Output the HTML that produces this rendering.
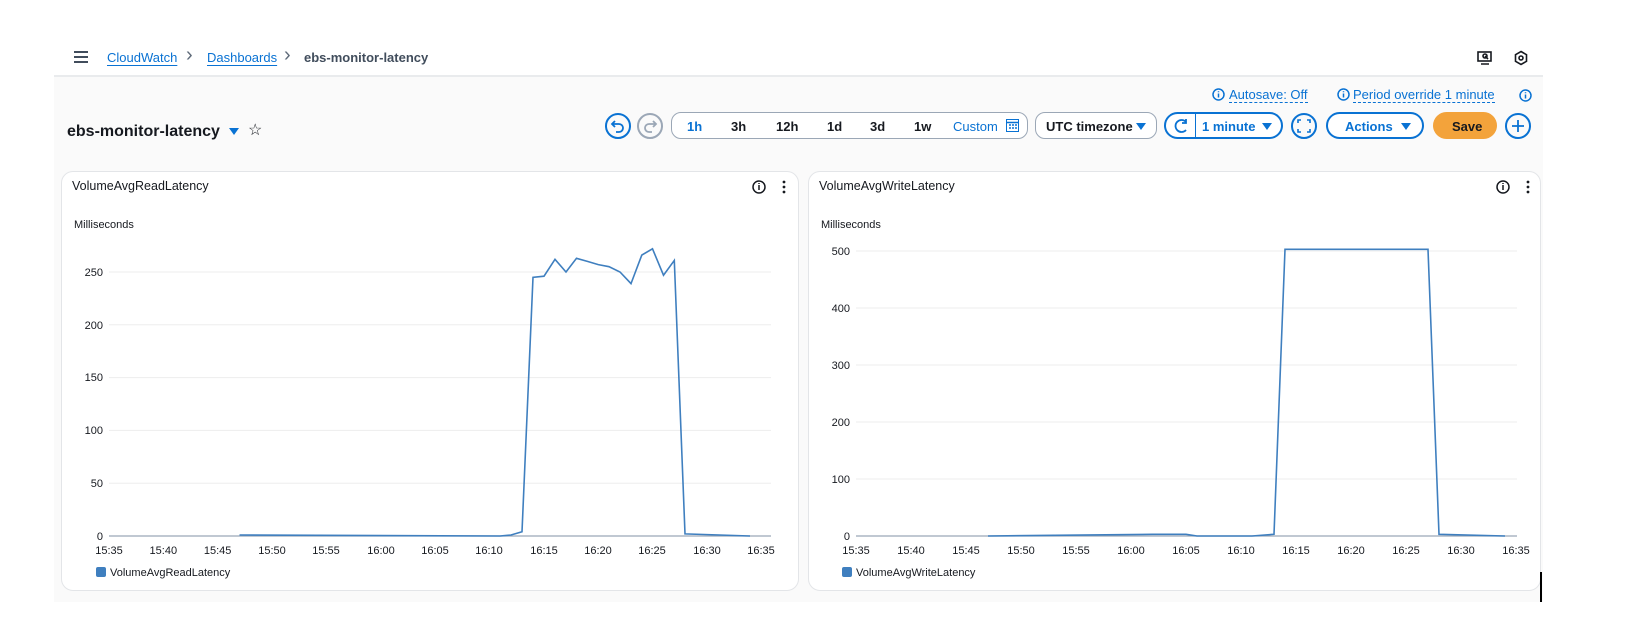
<!DOCTYPE html>
<html><head><meta charset="utf-8"><style>
*{margin:0;padding:0;box-sizing:border-box}
body{width:1650px;height:630px;background:#fff;font-family:"Liberation Sans",sans-serif;color:#16191f;position:relative;overflow:hidden}
.a{position:absolute;white-space:nowrap}
.lnk{color:#0972d3;text-decoration:underline;text-underline-offset:3px}
.gray{position:absolute;left:54px;top:75px;width:1489px;height:527px;background:#fafafa;border-top:2px solid #e9ebed}
.panel{position:absolute;top:171px;height:420px;background:#fff;border:1px solid #e3e5e8;border-radius:12px}
.pill{position:absolute;border:1px solid #9ba7b6;border-radius:10px;background:#fff;height:27px;top:112px}
.circ{position:absolute;width:26px;height:26px;border:2px solid #0972d3;border-radius:50%;top:113px}
.t{font-size:13px;font-weight:bold;color:#16191f}
</style></head><body>
<div class="gray"></div>
<div class="a" style="left:74px;top:51px;width:14px;height:2px;background:#414d5c;box-shadow:0 5px 0 #414d5c,0 10px 0 #414d5c"></div>
<div class="a lnk" style="left:107px;top:50px;font-size:13px">CloudWatch</div>
<div class="a" style="left:186px;top:44px;font-size:20px;color:#5f6b7a">&#8250;</div>
<div class="a lnk" style="left:207px;top:50px;font-size:13px">Dashboards</div>
<div class="a" style="left:284px;top:44px;font-size:20px;color:#5f6b7a">&#8250;</div>
<div class="a" style="left:304px;top:50px;font-size:13px;font-weight:bold;color:#414d5c">ebs-monitor-latency</div>
<svg class="a" style="left:1477px;top:50px" width="16" height="16" viewBox="0 0 16 16" fill="none" stroke="#16191f" stroke-width="1.6"><rect x="1" y="2" width="13" height="9"/><path d="M4 14h8M8 6l3 3"/><circle cx="8" cy="6" r="2"/></svg>
<svg class="a" style="left:1513px;top:50px" width="16" height="16" viewBox="0 0 16 16" fill="none" stroke="#16191f" stroke-width="1.6"><path d="M8 1.5l5.5 3.2v6.6L8 14.5 2.5 11.3V4.7z"/><circle cx="8" cy="8" r="2"/></svg>
<svg class="a" style="left:1212px;top:88px" width="13" height="13"><circle cx="6.5" cy="6.5" r="5.5" fill="none" stroke="#0972d3" stroke-width="1.5"/><path d="M6.5 5.5v4M6.5 3.3v1" stroke="#0972d3" stroke-width="1.5"/></svg>
<div class="a" style="left:1229px;top:87px;font-size:13px;color:#0972d3;border-bottom:1px dashed #0972d3">Autosave: Off</div>
<svg class="a" style="left:1337px;top:88px" width="13" height="13"><circle cx="6.5" cy="6.5" r="5.5" fill="none" stroke="#0972d3" stroke-width="1.5"/><path d="M6.5 5.5v4M6.5 3.3v1" stroke="#0972d3" stroke-width="1.5"/></svg>
<div class="a" style="left:1353px;top:87px;font-size:13px;color:#0972d3;border-bottom:1px dashed #0972d3">Period override 1 minute</div>
<svg class="a" style="left:1519px;top:89px" width="13" height="13"><circle cx="6.5" cy="6.5" r="5.5" fill="none" stroke="#0972d3" stroke-width="1.5"/><path d="M6.5 5.5v4M6.5 3.3v1" stroke="#0972d3" stroke-width="1.5"/></svg>
<div class="a" style="left:67px;top:123px;font-size:16px;font-weight:bold">ebs-monitor-latency</div>
<div class="a" style="left:229px;top:128px;width:0;height:0;border-left:5px solid transparent;border-right:5px solid transparent;border-top:7px solid #0972d3"></div>
<div class="a" style="left:248px;top:120px;font-size:16px">&#9734;</div>
<div class="circ" style="left:605px"><svg width="22" height="22" viewBox="0 0 22 22" fill="none" stroke="#0972d3" stroke-width="1.8"><path d="M8 6L5 9l3 3M5 9h7a4 4 0 010 8H9"/></svg></div>
<div class="circ" style="left:637px;border-color:#9ba7b6"><svg width="22" height="22" viewBox="0 0 22 22" fill="none" stroke="#9ba7b6" stroke-width="1.8"><path d="M14 6l3 3-3 3M17 9h-7a4 4 0 000 8h3"/></svg></div>
<div class="pill" style="left:671px;width:357px"></div>
<div class="a t" style="left:687px;top:119px;color:#0972d3">1h</div>
<div class="a t" style="left:731px;top:119px">3h</div>
<div class="a t" style="left:776px;top:119px">12h</div>
<div class="a t" style="left:827px;top:119px">1d</div>
<div class="a t" style="left:870px;top:119px">3d</div>
<div class="a t" style="left:914px;top:119px">1w</div>
<div class="a" style="left:953px;top:119px;font-size:13px;color:#0972d3">Custom</div>
<svg class="a" style="left:1006px;top:119px" width="13" height="13"><rect x="0.5" y="0.5" width="12" height="12" fill="none" stroke="#0972d3"/><path d="M0 3.5h13M3 6h2M6 6h2M9 6h2M3 9h2M6 9h2M9 9h2" stroke="#0972d3" stroke-width="1.5"/></svg>
<div class="pill" style="left:1035px;width:122px"></div>
<div class="a t" style="left:1046px;top:119px">UTC timezone</div>
<div class="a" style="left:1136px;top:123px;border-left:5px solid transparent;border-right:5px solid transparent;border-top:7px solid #0972d3"></div>
<div class="pill" style="left:1164px;width:119px;border:2px solid #0972d3;border-radius:14px"></div>
<div class="a" style="left:1195px;top:113px;width:1px;height:25px;background:#0972d3"></div>
<svg class="a" style="left:1172px;top:117px" width="18" height="18" viewBox="0 0 18 18" fill="none" stroke="#0972d3" stroke-width="1.8"><path d="M14 5a6 6 0 100 8M14 2v4h-4"/></svg>
<div class="a t" style="left:1202px;top:119px;color:#0972d3">1 minute</div>
<div class="a" style="left:1262px;top:123px;border-left:5px solid transparent;border-right:5px solid transparent;border-top:7px solid #0972d3"></div>
<div class="circ" style="left:1291px"><svg width="22" height="22" viewBox="0 0 22 22" fill="none" stroke="#0972d3" stroke-width="1.6"><path d="M5 8V5h3M14 5h3v3M17 14v3h-3M8 17H5v-3"/></svg></div>
<div class="pill" style="left:1326px;width:98px;border:2px solid #0972d3;border-radius:14px"></div>
<div class="a t" style="left:1345px;top:119px;color:#0972d3">Actions</div>
<div class="a" style="left:1401px;top:123px;border-left:5px solid transparent;border-right:5px solid transparent;border-top:7px solid #0972d3"></div>
<div class="a" style="left:1433px;top:112px;width:64px;height:27px;background:#f3a33b;border-radius:14px"></div>
<div class="a t" style="left:1452px;top:119px">Save</div>
<div class="circ" style="left:1505px"><svg width="22" height="22"><path d="M11 5v12M5 11h12" stroke="#0972d3" stroke-width="1.8"/></svg></div>
<div class="panel" style="left:61px;width:738px"></div>
<div class="panel" style="left:808px;width:733px"></div>
<svg class="a" style="left:0;top:0" width="1650" height="630" font-family="Liberation Sans, sans-serif">
<g font-size="12" fill="#16191f">
<text x="72" y="190" font-size="12.5">VolumeAvgReadLatency</text>
<text x="819" y="190" font-size="12.5">VolumeAvgWriteLatency</text>
<text x="74" y="228" font-size="11">Milliseconds</text>
<text x="821" y="228" font-size="11">Milliseconds</text>
</g>
<g fill="none" stroke="#16191f" stroke-width="1.5"><circle cx="759" cy="187" r="6"/><path d="M759 185v5M759 183v1"/><circle cx="1503" cy="187" r="6"/><path d="M1503 185v5M1503 183v1"/></g>
<g fill="#16191f"><circle cx="784" cy="182" r="1.4"/><circle cx="784" cy="187" r="1.4"/><circle cx="784" cy="192" r="1.4"/><circle cx="1528" cy="182" r="1.4"/><circle cx="1528" cy="187" r="1.4"/><circle cx="1528" cy="192" r="1.4"/></g>
<g transform="translate(1,2)">
<g stroke="#ededed" stroke-width="1"><path d="M108 270H770M108 322.8H770M108 375.6H770M108 428.4H770M108 481.2H770"/></g>
<path d="M108 534H770" stroke="#9ba7b6" stroke-width="1.2"/>
<g font-size="11" fill="#16191f" text-anchor="end">
<text x="102" y="538">0</text><text x="102" y="485">50</text><text x="102" y="432">100</text><text x="102" y="379">150</text><text x="102" y="327">200</text><text x="102" y="274">250</text>
</g>
<g font-size="11" fill="#16191f" text-anchor="middle">
<text x="108" y="552">15:35</text><text x="162.3" y="552">15:40</text><text x="216.6" y="552">15:45</text><text x="271" y="552">15:50</text><text x="325" y="552">15:55</text><text x="380" y="552">16:00</text><text x="434" y="552">16:05</text><text x="488" y="552">16:10</text><text x="543" y="552">16:15</text><text x="597" y="552">16:20</text><text x="651" y="552">16:25</text><text x="706" y="552">16:30</text><text x="760" y="552">16:35</text>
</g>
<polyline fill="none" stroke="#3f7fbf" stroke-width="1.6" points="238.5,533 499,534 510,533 521,529.8 532,275.3 543,274.2 554,257.3 565,270 575.5,256.3 586.4,259.4 597.3,262.6 608,264.7 619,270 630,281.6 640.8,253.1 651.5,246.8 662.5,273.2 673.3,258.4 684,531.9 749,534"/>
</g>
<g transform="translate(5,2)">
<g stroke="#ededed" stroke-width="1"><path d="M851 249H1512M851 306H1512M851 363H1512M851 420H1512M851 477H1512"/></g>
<path d="M851 534H1512" stroke="#9ba7b6" stroke-width="1.2"/>
<g font-size="11" fill="#16191f" text-anchor="end">
<text x="845" y="538">0</text><text x="845" y="481">100</text><text x="845" y="424">200</text><text x="845" y="367">300</text><text x="845" y="310">400</text><text x="845" y="253">500</text>
</g>
<g font-size="11" fill="#16191f" text-anchor="middle">
<text x="851" y="552">15:35</text><text x="906" y="552">15:40</text><text x="961" y="552">15:45</text><text x="1016" y="552">15:50</text><text x="1071" y="552">15:55</text><text x="1126" y="552">16:00</text><text x="1181" y="552">16:05</text><text x="1236" y="552">16:10</text><text x="1291" y="552">16:15</text><text x="1346" y="552">16:20</text><text x="1401" y="552">16:25</text><text x="1456" y="552">16:30</text><text x="1511" y="552">16:35</text>
</g>
<polyline fill="none" stroke="#3f7fbf" stroke-width="1.6" points="983,534 1148,532.3 1181,532.3 1192,534 1247,534 1269,532.3 1280,247.3 1423,247.3 1434,532.3 1500,534"/>
</g>
<rect x="96" y="567" width="10" height="10" rx="2" fill="#3f7fbf"/><text x="110" y="576" font-size="11" fill="#16191f">VolumeAvgReadLatency</text>
<rect x="842" y="567" width="10" height="10" rx="2" fill="#3f7fbf"/><text x="856" y="576" font-size="11" fill="#16191f">VolumeAvgWriteLatency</text>
<path d="M1541 572V602" stroke="#000" stroke-width="2"/>
</svg>
</body></html>
